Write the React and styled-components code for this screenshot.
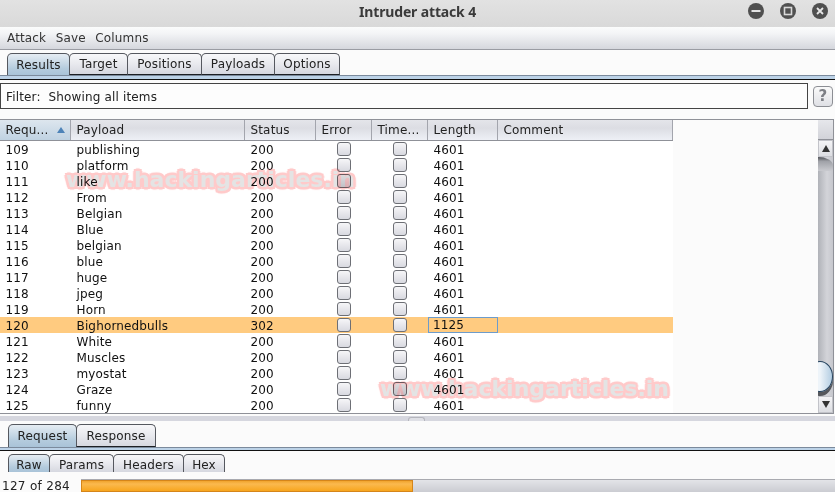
import React from 'react'
import styled, { createGlobalStyle } from 'styled-components'

const GlobalStyle = createGlobalStyle`
	html, body {
		margin: 0;
		padding: 0;
		background: #fbfbfb;
	}
	body {
		font-family: 'DejaVu Sans', sans-serif;
		font-size: 12px;
		letter-spacing: 0.15px;
		color: #111;
	}
`

const Window = styled.div`
	position: relative;
	width: 835px;
	height: 492px;
	overflow: hidden;
	background: #fbfbfb;
	display: flex;
	flex-direction: column;
`

const TitleBar = styled.div`
	position: relative;
	flex: 0 0 27px;
	box-sizing: border-box;
	padding-bottom: 5px;
	background: linear-gradient(#e2e2e2, #d9d9d9);
	display: flex;
	align-items: center;
	justify-content: center;
	font-family: 'Noto Sans', sans-serif;
	font-weight: 700;
	font-size: 14px;
	letter-spacing: -0.15px;
	color: #3a3a3a;
`

const WindowButtons = styled.div`
	position: absolute;
	right: 7px;
	top: 3px;
	display: flex;
	gap: 16px;
`

const WindowButton = styled.svg`
	width: 16px;
	height: 16px;
	display: block;
`

const MenuBar = styled.div`
	flex: 0 0 23px;
	box-sizing: border-box;
	display: flex;
	align-items: center;
	gap: 9.5px;
	padding: 0 0 1px 7px;
	background: linear-gradient(#fbfcfc, #f3f4f6 30%, #d5d7dd);
	border-bottom: 1px solid #9a9ca3;
	color: #333;
`

const TabStrip = styled.div`
	display: flex;
	align-items: flex-end;
	height: ${({ $height }) => $height}px;
	padding-left: ${({ $left }) => $left}px;
	box-sizing: border-box;
	flex: none;
`

const Tab = styled.div`
	box-sizing: border-box;
	height: ${({ $height }) => $height}px;
	width: ${({ $width }) => $width}px;
	padding-top: ${({ $drop }) => $drop || 0}px;
	display: flex;
	align-items: center;
	justify-content: center;
	border: 1px solid #55585f;
	border-bottom-color: #1d1f24;
	border-radius: 5px 5px 0 0;
	margin-right: -1px;
	color: #222;
	background: ${({ $active }) =>
		$active
			? 'linear-gradient(#e6edf3, #b4cbdd 70%, #a9c3d8)'
			: 'linear-gradient(#f8f8fa, #e8e9ee 50%, #d6d8e0)'};
	${({ $active, $open }) => ($active || $open) && 'border-bottom: none;'}
`

const TabRule = styled.div`
	flex: none;
	box-sizing: border-box;
	height: ${({ $height }) => $height}px;
	background: #bcd2e7;
	border-top: 1px solid #7b8a9c;
	border-bottom: 1px solid #111;
`

const FilterRow = styled.div`
	flex: none;
	display: flex;
	align-items: center;
	height: 26px;
	margin-top: 3px;
	gap: 5px;
`

const FilterBox = styled.div`
	box-sizing: border-box;
	width: 808px;
	height: 26px;
	border: 1px solid #444;
	display: flex;
	align-items: center;
	padding: 1px 0 0 5px;
	color: #222;
	background: #fdfdfd;
`

const HelpButton = styled.div`
	box-sizing: border-box;
	width: 20px;
	height: 21px;
	border: 1px solid #8c8e94;
	border-radius: 4px;
	background: linear-gradient(#fafafa, #dfe0e5);
	display: flex;
	align-items: center;
	justify-content: center;
	font-weight: 700;
	font-size: 15px;
	color: #7d7f85;
`

const TablePane = styled.div`
	flex: none;
	box-sizing: border-box;
	margin-top: 10px;
	width: 834px;
	height: 295px;
	border-top: 1px solid #8f9198;
	border-bottom: 1px solid #8f9198;
	border-right: 1px solid #8f9198;
	display: flex;
`

const TableArea = styled.div`
	width: 673px;
	flex: none;
`

const Row = styled.div`
	display: grid;
	grid-template-columns: 71px 174px 71px 56px 56px 70px 175px;
	height: 16px;
	align-items: center;
	background: ${({ $selected }) => ($selected ? '#ffcb80' : '#fff')};
`

const HeaderRow = styled(Row)`
	height: 21px;
	align-items: start;
	background: linear-gradient(#e4e5ea, #dcdde3 40%, #eef0f6);
	border-bottom: 1px solid #8f9198;
	box-sizing: border-box;
`

const HeaderCell = styled.div`
	box-sizing: border-box;
	height: 20px;
	display: flex;
	align-items: center;
	justify-content: space-between;
	padding: 0 4px 1px 5.5px;
	border-right: 1px solid #a3a5ad;
	color: #222;
	background: ${({ $sorted }) => ($sorted ? 'linear-gradient(#dde6ee, #bfd2e2)' : 'transparent')};
`

const SortArrow = styled.span`
	width: 0;
	height: 0;
	border-left: 4px solid transparent;
	border-right: 4px solid transparent;
	border-bottom: 6px solid #4d83b8;
	margin-right: 1px;
`

const Cell = styled.div`
	box-sizing: border-box;
	height: 16px;
	line-height: 18px;
	padding-left: 5.5px;
	white-space: nowrap;
	${({ $focused }) => $focused && 'border: 1px solid #6d9ccb; line-height: 15px; padding-left: 4px;'}
`

const CheckCell = styled.div`
	display: flex;
	justify-content: center;
	height: 16px;
`

const CheckBox = styled.div`
	box-sizing: border-box;
	width: 14px;
	height: 14px;
	margin-top: 1px;
	border: 1px solid #6d6f75;
	border-radius: 3px;
	background: linear-gradient(#f6f6f8, #d8d9e0);
`

const BlankArea = styled.div`
	flex: 1;
	background: #fbfbfb;
`

const ScrollColumn = styled.div`
	flex: 0 0 15px;
	display: flex;
	flex-direction: column;
	background: #c4c5cb;
`

const ScrollCorner = styled.div`
	flex: 0 0 20px;
	box-sizing: border-box;
	border-bottom: 1px solid #8f9198;
	background: linear-gradient(#e6e7eb, #d2d3d9);
`

const ScrollButton = styled.div`
	flex: 0 0 17px;
	box-sizing: border-box;
	border: 1px solid #c2c3c9;
	background: linear-gradient(#f4f4f6, #dcdde2);
	display: flex;
	align-items: center;
	justify-content: center;
`

const Triangle = styled.span`
	width: 0;
	height: 0;
	border-left: 4px solid transparent;
	border-right: 4px solid transparent;
	${({ $down }) => ($down ? 'border-top' : 'border-bottom')}: 7px solid #333;
`

const ScrollTrack = styled.div`
	position: relative;
	flex: 1;
	overflow: hidden;
	background: linear-gradient(90deg, #b0b2b8, #d3d4d9 60%, #c6c7cd);
`

const ScrollCap = styled.div`
	position: absolute;
	left: 0;
	top: 0;
	width: 15px;
	height: 14px;
	border-radius: 0 100% 0 0 / 0 60% 0 0;
	background: linear-gradient(#4f5156, #9fa1a7 30%, #c9cacf);
`

const ScrollThumb = styled.div`
	position: absolute;
	left: -11px;
	bottom: 4px;
	width: 26px;
	height: 31px;
	box-sizing: border-box;
	border: 1px solid #27445f;
	border-radius: 50%;
	background: linear-gradient(90deg, #eef4f9 50%, #b3cde2);
	box-shadow: 0 4px 0 #55575c;
`

const Splitter = styled.div`
	flex: none;
	position: relative;
	height: 5px;
	margin-top: 2px;
	background: #d6d7df;
`

const SplitterGrip = styled.div`
	position: absolute;
	left: 408px;
	top: 1px;
	width: 17px;
	height: 4px;
	box-sizing: border-box;
	border: 1px solid #b5b6bd;
	border-bottom: none;
	border-radius: 3px 3px 0 0;
	background: #dfe0e6;
`

const Footer = styled.div`
	flex: 1;
	display: flex;
	align-items: flex-start;
	background: #fbfbfb;
	color: #222;
`

const FooterLabel = styled.span`
	box-sizing: border-box;
	width: 81px;
	padding: 9px 0 0 2px;
	line-height: 11px;
	letter-spacing: 0.3px;
`

const ProgressTrack = styled.div`
	flex: 1;
	height: 13px;
	margin-top: 7px;
	box-sizing: border-box;
	border-top: 1px solid #a9aab0;
	background: linear-gradient(#e3e4e8, #cbccd2);
`

const ProgressFill = styled.div`
	width: ${({ $percent }) => $percent}%;
	height: 100%;
	box-sizing: border-box;
	border: 1px solid #d5851a;
	background: linear-gradient(#f0a42e, #fbb94f 30%, #f7a51d);
`

const Watermark = styled.div`
	position: absolute;
	left: ${({ $left }) => $left}px;
	top: ${({ $top }) => $top}px;
	font-family: 'DejaVu Sans', sans-serif;
	font-weight: 700;
	font-size: 22px;
	letter-spacing: 0;
	line-height: 24px;
	white-space: nowrap;
	color: #e4e4e4;
	text-shadow:
		2px 0 #ffcaca, -2px 0 #ffcaca, 0 2px #ffcaca, 0 -2px #ffcaca,
		2px 2px #ffcaca, -2px 2px #ffcaca, 2px -2px #ffcaca, -2px -2px #ffcaca,
		3px 0 1px #ffdcdc, -3px 0 1px #ffdcdc, 0 3px 1px #ffdcdc, 0 -3px 1px #ffdcdc;
	mix-blend-mode: multiply;
	pointer-events: none;
`

const rows = [
	[109, 'publishing'], [110, 'platform'], [111, 'like'], [112, 'From'],
	[113, 'Belgian'], [114, 'Blue'], [115, 'belgian'], [116, 'blue'],
	[117, 'huge'], [118, 'jpeg'], [119, 'Horn'], [120, 'Bighornedbulls', 302, 1125],
	[121, 'White'], [122, 'Muscles'], [123, 'myostat'], [124, 'Graze'], [125, 'funny'],
]

const columns = ['Requ...', 'Payload', 'Status', 'Error', 'Time...', 'Length', 'Comment']

export default function App() {
	return (
		<Window>
			<GlobalStyle />
			<TitleBar>
				Intruder attack 4
				<WindowButtons>
					<WindowButton viewBox='0 0 16 16'>
						<circle cx='8' cy='8' r='8' fill='#505050' />
						<rect x='3.5' y='7' width='9' height='2' fill='#e4e4e4' />
					</WindowButton>
					<WindowButton viewBox='0 0 16 16'>
						<circle cx='8' cy='8' r='8' fill='#505050' />
						<rect x='4.5' y='4.5' width='7' height='7' fill='none' stroke='#d8d8d8' strokeWidth='1.6' />
					</WindowButton>
					<WindowButton viewBox='0 0 16 16'>
						<circle cx='8' cy='8' r='8' fill='#505050' />
						<path d='M5 5l6 6M11 5l-6 6' stroke='#e8e8e8' strokeWidth='1.8' />
					</WindowButton>
				</WindowButtons>
			</TitleBar>
			<MenuBar>
				<span>Attack</span>
				<span>Save</span>
				<span>Columns</span>
			</MenuBar>
			<TabStrip $height={25} $left={7}>
				<Tab $active $height={22} $width={63}>Results</Tab>
				<Tab $height={22} $width={59}>Target</Tab>
				<Tab $height={22} $width={75}>Positions</Tab>
				<Tab $height={22} $width={74}>Payloads</Tab>
				<Tab $height={22} $width={66}>Options</Tab>
			</TabStrip>
			<TabRule $height={5} />
			<FilterRow>
				<FilterBox>Filter:&nbsp; Showing all items</FilterBox>
				<HelpButton>?</HelpButton>
			</FilterRow>
			<TablePane>
				<TableArea>
					<HeaderRow>
						{columns.map((name, i) => (
							<HeaderCell key={name} $sorted={i === 0}>
								{name}
								{i === 0 && <SortArrow />}
							</HeaderCell>
						))}
					</HeaderRow>
					{rows.map(([id, payload, status = 200, length = 4601]) => (
						<Row key={id} $selected={id === 120}>
							<Cell>{id}</Cell>
							<Cell>{payload}</Cell>
							<Cell>{status}</Cell>
							<CheckCell><CheckBox /></CheckCell>
							<CheckCell><CheckBox /></CheckCell>
							<Cell $focused={id === 120}>{length}</Cell>
							<Cell />
						</Row>
					))}
				</TableArea>
				<BlankArea />
				<ScrollColumn>
					<ScrollCorner />
					<ScrollButton><Triangle /></ScrollButton>
					<ScrollTrack>
						<ScrollCap />
						<ScrollThumb />
					</ScrollTrack>
					<ScrollButton><Triangle $down /></ScrollButton>
				</ScrollColumn>
			</TablePane>
			<Splitter><SplitterGrip /></Splitter>
			<TabStrip $height={26} $left={8}>
				<Tab $active $height={23} $width={69}>Request</Tab>
				<Tab $height={23} $width={80}>Response</Tab>
			</TabStrip>
			<TabRule $height={4} />
			<TabStrip $height={21} $left={8}>
				<Tab $active $drop={3} $height={18} $width={42}>Raw</Tab>
				<Tab $open $drop={3} $height={18} $width={65}>Params</Tab>
				<Tab $open $drop={3} $height={18} $width={71}>Headers</Tab>
				<Tab $open $drop={3} $height={18} $width={42}>Hex</Tab>
			</TabStrip>
			<Footer>
				<FooterLabel>127 of 284</FooterLabel>
				<ProgressTrack>
					<ProgressFill $percent={44} />
				</ProgressTrack>
			</Footer>
			<Watermark $left={66} $top={168}>www.hackingarticles.in</Watermark>
			<Watermark $left={380} $top={377}>www.hackingarticles.in</Watermark>
		</Window>
	)
}
